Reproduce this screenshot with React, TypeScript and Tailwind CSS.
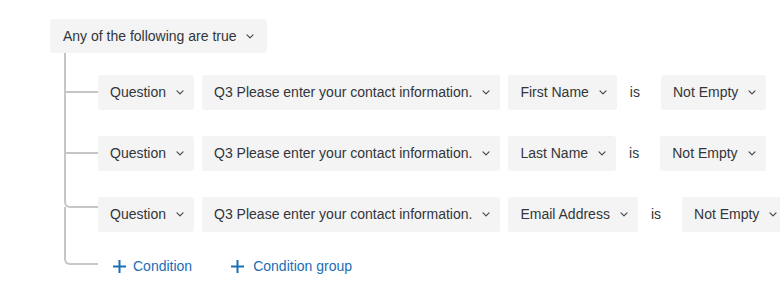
import React from "react";

const font = { fontFamily: '"Liberation Sans", Arial, sans-serif' };

function Chevron() {
  return (
    <svg width="8" height="5" viewBox="0 0 8 5" fill="none" className="shrink-0">
      <path d="M1 0.9 L4 3.9 L7 0.9" stroke="#4a4d50" strokeWidth="1.25" strokeLinecap="round" strokeLinejoin="round" />
    </svg>
  );
}

function Plus() {
  return (
    <svg width="15" height="15" viewBox="0 0 15 15" fill="none" className="shrink-0">
      <path d="M7.5 1 V14 M1 7.5 H14" stroke="#1a6eb5" strokeWidth="2" />
    </svg>
  );
}

function Select({ label }: { label: string }) {
  return (
    <button className="h-[35px] shrink-0 inline-flex items-center gap-[10px] pl-[12px] pr-[10px] bg-[#f4f4f4] rounded-[3px] text-[14px] text-[#32363a] whitespace-nowrap">
      <span>{label}</span>
      <Chevron />
    </button>
  );
}

const rows = [
  { field: "First Name", connector: "-top-[22px] h-[40px]" },
  { field: "Last Name", connector: "-top-[44px] h-[62px]" },
  { field: "Email Address", connector: "-top-[44px] h-[55px] rounded-bl-[6px]" },
];

export default function App() {
  return (
    <div className="w-[780px] h-[300px] overflow-hidden bg-white pt-[19px] pl-[50px]" style={font}>
      <button className="h-[34px] inline-flex items-center gap-[9px] pl-[13px] pr-[13px] bg-[#f4f4f4] rounded-[3px] text-[14px] text-[#32363a]">
        <span>Any of the following are true</span>
        <Chevron />
      </button>

      <div className="ml-[14px] pl-[34px] flex flex-col">
        {rows.map((row, i) => (
          <div key={row.field} className={`relative flex items-center gap-2 ${i === 0 ? "mt-[22px]" : "mt-[26px]"}`}>
            <div className={`absolute right-full w-[34px] border-l-2 border-b-2 border-[#c6c6c6] ${row.connector}`} />
            <Select label="Question" />
            <Select label="Q3 Please enter your contact information." />
            <Select label={row.field} />
            <span className="shrink-0 pl-[5px] pr-[13px] text-[14px] text-[#32363a]">is</span>
            <Select label="Not Empty" />
          </div>
        ))}

        <div className="relative mt-[19px] flex items-center gap-[10px]">
          <div className="absolute right-full -top-[44px] h-[58px] w-[34px] border-l-2 border-b-2 border-[#c6c6c6] rounded-bl-[6px]" />
          <button className="h-[30px] inline-flex items-center gap-[6px] px-[14px] text-[14px] text-[#1a6eb5] whitespace-nowrap">
            <Plus />
            <span>Condition</span>
          </button>
          <button className="h-[30px] inline-flex items-center gap-[8px] px-[14px] text-[14px] text-[#1a6eb5] whitespace-nowrap">
            <Plus />
            <span>Condition group</span>
          </button>
        </div>
      </div>
    </div>
  );
}
